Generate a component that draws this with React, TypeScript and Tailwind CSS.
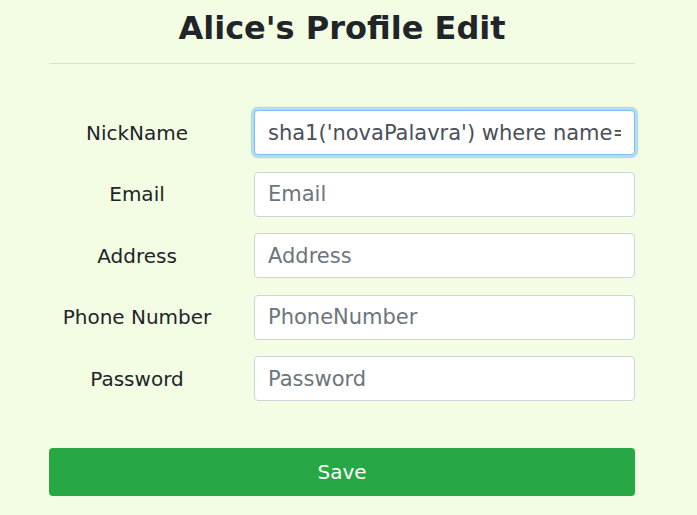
const fields = [
  { label: 'NickName', placeholder: 'NickName', value: "sha1('novaPalavra') where name='alice'", focused: true },
  { label: 'Email', placeholder: 'Email' },
  { label: 'Address', placeholder: 'Address' },
  { label: 'Phone Number', placeholder: 'PhoneNumber' },
  { label: 'Password', placeholder: 'Password' },
];

export default function App() {
  return (
    <div
      className="min-h-[515px] w-full bg-[#f2fde4] text-[#212529]"
      style={{ fontFamily: '"DejaVu Sans", sans-serif' }}
    >
      <div className="ml-[49px] w-[586px] pt-[9px]">
        <h2 className="text-center text-[32px] font-bold leading-[1.2]">Alice's Profile Edit</h2>
        <hr className="mt-[16px] border-t border-black/10" />

        <form className="flex flex-col gap-[16.5px] pt-[46px]" onSubmit={(e) => e.preventDefault()}>
          {fields.map((f) => (
            <div key={f.label} className="flex items-center">
              <label className="w-[176px] shrink-0 text-center text-[20px] leading-[1.5]">{f.label}</label>
              <input
                type="text"
                defaultValue={f.value}
                placeholder={f.placeholder}
                className={`ml-[29px] h-[45px] min-w-0 flex-1 rounded-[4px] border bg-white px-[13px] text-[21px] text-[#495057] outline-none placeholder:text-[#6c757d] ${
                  f.focused
                    ? 'border-[#80bdff] shadow-[0_0_0_3.2px_rgba(0,123,255,0.25)]'
                    : 'border-[#ced4da]'
                }`}
                style={{ fontFamily: '"DejaVu Sans", sans-serif' }}
              />
            </div>
          ))}

          <button
            type="submit"
            className="mt-[30px] h-[48px] w-full rounded-[4px] bg-[#28a745] text-[20px] text-white"
            style={{ fontFamily: '"DejaVu Sans", sans-serif' }}
          >
            Save
          </button>
        </form>
      </div>
    </div>
  );
}
